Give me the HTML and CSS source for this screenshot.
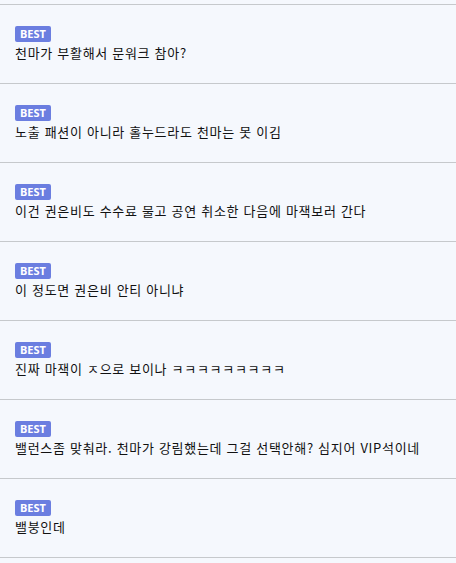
FILE: index.html
```html
<!DOCTYPE html>
<html lang="ko">
<head>
  <meta charset="UTF-8" />
  <meta name="viewport" content="width=device-width, initial-scale=1.0"/>
  <title>베스트 댓글</title>
  <link rel="stylesheet" href="styles.css">
</head>
<body>

  <ul class="comments">
    <li class="comment">
      <span class="badge">BEST</span>
      <p>천마가 부활해서 문워크 참아?</p>
    </li>
    <li class="comment">
      <span class="badge">BEST</span>
      <p>노출 패션이 아니라 홀누드라도 천마는 못 이김</p>
    </li>
    <li class="comment">
      <span class="badge">BEST</span>
      <p>이건 권은비도 수수료 물고 공연 취소한 다음에 마잭보러 간다</p>
    </li>
    <li class="comment">
      <span class="badge">BEST</span>
      <p>이 정도면 권은비 안티 아니냐</p>
    </li>
    <li class="comment">
      <span class="badge">BEST</span>
      <p>진짜 마잭이 ㅈ으로 보이나 ㅋㅋㅋㅋㅋㅋㅋㅋㅋ</p>
    </li>
    <li class="comment">
      <span class="badge">BEST</span>
      <p>밸런스좀 맞춰라. 천마가 강림했는데 그걸 선택안해? 심지어 VIP석이네</p>
    </li>
    <li class="comment">
      <span class="badge">BEST</span>
      <p>밸붕인데</p>
    </li>
  </ul>

</body>
</html>
```

FILE: styles.css
```css
:root {
  --row-bg: #f5f8fd;
  --line: #c6c9cc;
  --badge: #6b7ee0;
}

body {
  margin: 0;
  padding-top: 4px;
  background: var(--row-bg);
  font-family: "Noto Sans CJK KR", "Noto Sans", sans-serif;
  color: #111;
}

.comments {
  list-style: none;
  margin: 0;
  padding: 0;
}

.comment {
  height: 79px;
  box-sizing: border-box;
  padding: 21px 15px 0;
  border-top: 1px solid var(--line);
  background: var(--row-bg);
}

.comment:last-child {
  height: 80px;
  border-bottom: 1px solid var(--line);
}

.badge {
  display: block;
  width: max-content;
  height: 16px;
  line-height: 16px;
  padding: 0 5px;
  border-radius: 2px;
  background: var(--badge);
  color: #fff;
  font-family: "Noto Sans", sans-serif;
  font-size: 11px;
  font-weight: 700;
}

.comment p {
  margin: 0;
  font-size: 13px;
  line-height: 22px;
  letter-spacing: 0.7px;
}
```
